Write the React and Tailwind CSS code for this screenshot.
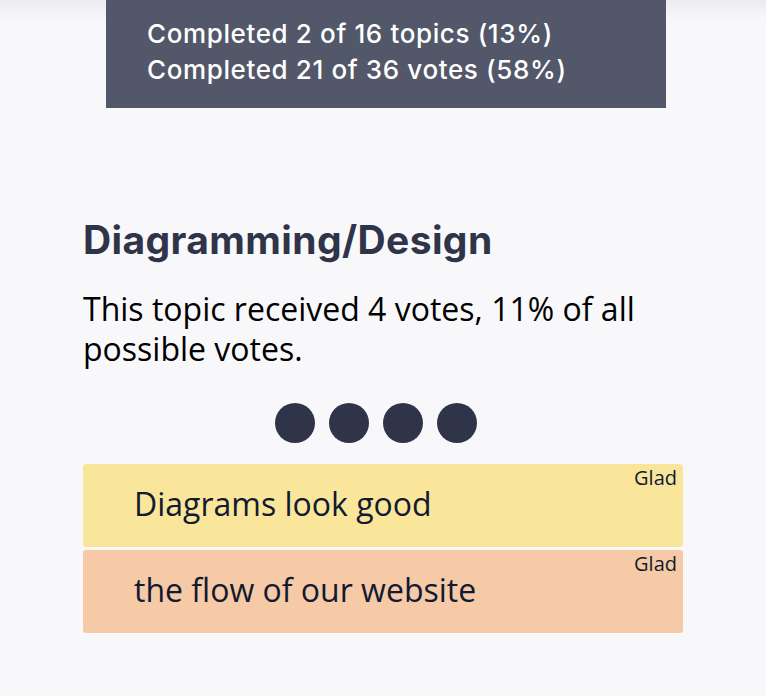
import React from 'react';

const cards = [
  { text: 'Diagrams look good', tag: 'Glad', color: 'bg-[#fae69b]' },
  { text: 'the flow of our website', tag: 'Glad', color: 'bg-[#f6c9a7]' },
];

const App = () => {
  return (
    <div className="min-h-[696px] bg-[#f8f8fb] relative">
      <div className="absolute inset-x-0 top-0 h-5 bg-gradient-to-b from-[#ececf0] to-transparent" />
      <div className="relative ml-[106px] w-[560px] h-[108px] bg-[#525769] pl-[41px] pt-[16px] text-white text-[26px] leading-[36px] font-medium tracking-[0.024em]" style={{ fontFamily: 'Inter, "Noto Sans", sans-serif' }}>
        <p>Completed 2 of 16 topics (13%)</p>
        <p>Completed 21 of 36 votes (58%)</p>
      </div>

      <div className="ml-[83px] w-[600px] pt-[108px]">
        <h2 className="text-[39px] leading-[48px] font-bold text-[#2f3449] tracking-[0.01em]" style={{ fontFamily: 'Inter, "Noto Sans", sans-serif' }}>
          Diagramming/Design
        </h2>
        <p className="mt-[25px] text-[32px] leading-[40px] text-black" style={{ fontFamily: '"Open Sans", sans-serif' }}>
          This topic received 4 votes, 11% of all possible votes.
        </p>
        <div className="flex justify-center gap-[14px] mt-[34px] pr-[14px]">
          {[0, 1, 2, 3].map(i => (
            <div key={i} className="w-10 h-10 rounded-full bg-[#2f3449]" />
          ))}
        </div>
        <div className="mt-[21px] flex flex-col gap-[3px]" style={{ fontFamily: '"Open Sans", sans-serif' }}>
          {cards.map((card, index) => (
            <div key={index} className={`relative h-[83px] rounded-[3px] ${card.color} flex items-center pl-[51px] pb-[4px]`}>
              <span className="absolute right-[6px] top-[2px] text-[20px] leading-6 text-[#111a30]">{card.tag}</span>
              <span className="text-[32px] text-[#111a30]">{card.text}</span>
            </div>
          ))}
        </div>
      </div>
    </div>
  );
};

export default App;
